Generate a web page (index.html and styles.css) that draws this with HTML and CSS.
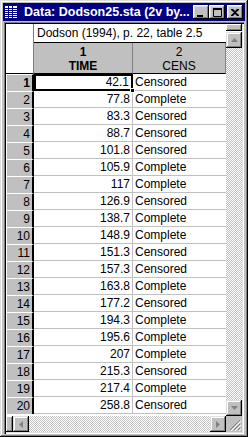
FILE: index.html
```html
<!doctype html>
<html>
<head>
<meta charset="utf-8">
<title>Data: Dodson25.sta</title>
<link rel="stylesheet" href="styles.css">
</head>
<body>
<div class="win">
	<div class="title">
		<svg class="ticon" width="14" height="14" viewBox="0 0 14 14">
			<rect x="0.5" y="0.5" width="13" height="13" fill="#fff" stroke="#000080"/>
			<path d="M1 3.5h12M1 5.5h12M1 7.5h12M1 9.5h12M1 11.5h12M4.5 1v12M8.5 1v12" stroke="#000080" fill="none"/>
		</svg>
		<span class="ttext">Data: Dodson25.sta (2v by...</span>
		<span class="tb tb-min"><svg width="8" height="7" viewBox="0 0 8 7"><rect x="0" y="5" width="6" height="2" fill="#000"/></svg></span>
		<span class="tb tb-max"><svg width="9" height="9" viewBox="0 0 9 9"><path d="M0.5 1.5h8v7h-8z" fill="none" stroke="#000"/><rect x="0" y="0" width="9" height="2" fill="#000"/></svg></span>
		<span class="tb tb-close"><svg width="8" height="7" viewBox="0 0 8 7"><path d="M0 0h2l2 2 2-2h2v1l-3 2.5 3 2.5v1h-2l-2-2-2 2h-2v-1l3-2.5-3-2.5z" fill="#000"/></svg></span>
	</div>
	<div class="client">
		<div class="sheet">
			<div class="grid">
				<div class="corner"></div>
				<div class="caption">Dodson (1994), p. 22, table 2.5</div>
				<div class="colhead cur">1<br>TIME</div>
				<div class="colhead">2<br>CENS</div>

				<div class="rowhead cur">1</div><div class="num sel">42.1<i class="handle"></i></div><div class="txt">Censored</div>
				<div class="rowhead">2</div><div class="num">77.8</div><div class="txt">Complete</div>
				<div class="rowhead">3</div><div class="num">83.3</div><div class="txt">Censored</div>
				<div class="rowhead">4</div><div class="num">88.7</div><div class="txt">Censored</div>
				<div class="rowhead">5</div><div class="num">101.8</div><div class="txt">Censored</div>
				<div class="rowhead">6</div><div class="num">105.9</div><div class="txt">Complete</div>
				<div class="rowhead">7</div><div class="num">117</div><div class="txt">Complete</div>
				<div class="rowhead">8</div><div class="num">126.9</div><div class="txt">Censored</div>
				<div class="rowhead">9</div><div class="num">138.7</div><div class="txt">Complete</div>
				<div class="rowhead">10</div><div class="num">148.9</div><div class="txt">Complete</div>
				<div class="rowhead">11</div><div class="num">151.3</div><div class="txt">Censored</div>
				<div class="rowhead">12</div><div class="num">157.3</div><div class="txt">Censored</div>
				<div class="rowhead">13</div><div class="num">163.8</div><div class="txt">Complete</div>
				<div class="rowhead">14</div><div class="num">177.2</div><div class="txt">Censored</div>
				<div class="rowhead">15</div><div class="num">194.3</div><div class="txt">Complete</div>
				<div class="rowhead">16</div><div class="num">195.6</div><div class="txt">Complete</div>
				<div class="rowhead">17</div><div class="num">207</div><div class="txt">Complete</div>
				<div class="rowhead">18</div><div class="num">215.3</div><div class="txt">Censored</div>
				<div class="rowhead">19</div><div class="num">217.4</div><div class="txt">Complete</div>
				<div class="rowhead">20</div><div class="num">258.8</div><div class="txt">Censored</div>
			</div>
			<div class="vscroll">
				<span class="split-v"></span>
				<span class="sbtn"><svg width="7" height="4" viewBox="0 0 7 4"><path d="M3.5 0L7 4H0z" fill="#808080"/></svg></span>
				<span class="track"></span>
				<span class="sbtn"><svg width="7" height="4" viewBox="0 0 7 4"><path d="M0 0h7L3.5 4z" fill="#808080"/></svg></span>
			</div>
			<div class="hscroll">
				<span class="split-h"></span>
				<span class="sbtn"><svg width="4" height="7" viewBox="0 0 4 7"><path d="M0 3.5L4 0v7z" fill="#808080"/></svg></span>
				<span class="track"></span>
				<span class="sbtn"><svg width="4" height="7" viewBox="0 0 4 7"><path d="M0 0l4 3.5L0 7z" fill="#808080"/></svg></span>
			</div>
			<div class="grip">
				<svg width="12" height="12" viewBox="0 0 12 12"><path d="M11 1L1 11M11 5L5 11M11 9L9 11" stroke="#808080" fill="none"/><path d="M12 2L2 12M12 6L6 12M12 10L10 12" stroke="#fff" fill="none"/></svg>
			</div>
		</div>
	</div>
</div>
</body>
</html>
```

FILE: styles.css
```css
*{ margin:0; padding:0; box-sizing:border-box;}
body{ background:#c0c0c0; font-family:"Liberation Sans", Arial, sans-serif; font-size:12px; color:#000;}

.win{ width:248px; height:437px; padding:3px; background:#c0c0c0; display:flex; flex-direction:column;
	box-shadow:inset -1px -1px #000, inset 1px 1px #dfdfdf, inset -2px -2px #808080, inset 2px 2px #fff;}

.title{ height:18px; background:#000080; display:flex; align-items:center; padding:0 2px 0 1px; color:#fff;}
.ticon{ display:block; flex:none; margin-right:6px;}
.ttext{ font-weight:bold; font-size:12.5px; white-space:nowrap; flex:1; overflow:hidden;}
.tb{ width:16px; height:14px; background:#c0c0c0; display:flex; align-items:center; justify-content:center;
	box-shadow:inset -1px -1px #000, inset 1px 1px #fff, inset -2px -2px #808080, inset 2px 2px #dfdfdf;}
.tb svg{ display:block;}
.tb-min svg{ margin:2px 0 0 -1px;}
.tb-close{ margin-left:2px;}

.client{ flex:1; margin:1px 1px 0 1px; padding:2px;
	box-shadow:inset 1px 1px #808080, inset 2px 2px #000, inset -1px -1px #fff, inset -2px -2px #dfdfdf;}
.sheet{ height:100%; display:grid; grid-template-columns:1fr 16px; grid-template-rows:1fr 16px; background:#fff;}

.grid{ display:grid; grid-template-columns:28px 99px 93px; grid-template-rows:19px 31px; grid-auto-rows:17px; overflow:hidden; line-height:16px;}
.corner{ grid-row:1 / 3; background:#fff; border-right:1px solid #808080; border-bottom:1px solid #000;}
.caption{ grid-column:2 / 4; padding-left:3px; border-bottom:1px solid #000; white-space:nowrap; line-height:18px;}
.colhead{ background:#c0c0c0; text-align:center; line-height:14px; padding-top:2px; border-right:1px solid #808080; border-bottom:1px solid #000;}
.colhead.cur{ font-weight:bold;}

.rowhead{ background:#c0c0c0; text-align:right; padding-right:2px; border-top:1px solid #fff; border-left:1px solid #fff; border-right:2px solid #000;}
.rowhead.cur{ font-weight:bold;}
.num{ text-align:right; padding-right:2px; border-right:1px solid #c0c0c0; border-bottom:1px solid #c0c0c0; position:relative;}
.txt{ padding-left:2px; border-bottom:1px solid #c0c0c0;}
.num.sel{ border:2px solid #000; line-height:13px;}
.handle{ position:absolute; right:-4px; bottom:-4px; width:5px; height:5px; background:#000; border:1px solid #fff; z-index:1;}

.vscroll{ display:flex; flex-direction:column;}
.hscroll{ display:flex;}
.track{ flex:1; background:repeating-conic-gradient(#c0c0c0 0 25%, #fff 0 50%) 0 0/2px 2px;}
.sbtn{ flex:none; width:16px; height:16px; background:#c0c0c0; display:flex; align-items:center; justify-content:center;
	box-shadow:inset -1px -1px #000, inset 1px 1px #dfdfdf, inset -2px -2px #808080, inset 2px 2px #fff;}
.sbtn svg{ display:block;}
.split-v{ height:7px; margin-bottom:1px; background:#c0c0c0;
	box-shadow:inset -1px -1px #000, inset 1px 1px #fff, inset -2px -2px #808080;}
.split-h{ width:7px; background:#c0c0c0;
	box-shadow:inset -1px -1px #000, inset 1px 1px #fff, inset -2px -2px #808080;}
.grip{ background:#c0c0c0; display:flex; align-items:flex-end; justify-content:flex-end; padding:0 1px 1px 0;}
.grip svg{ display:block;}
```
